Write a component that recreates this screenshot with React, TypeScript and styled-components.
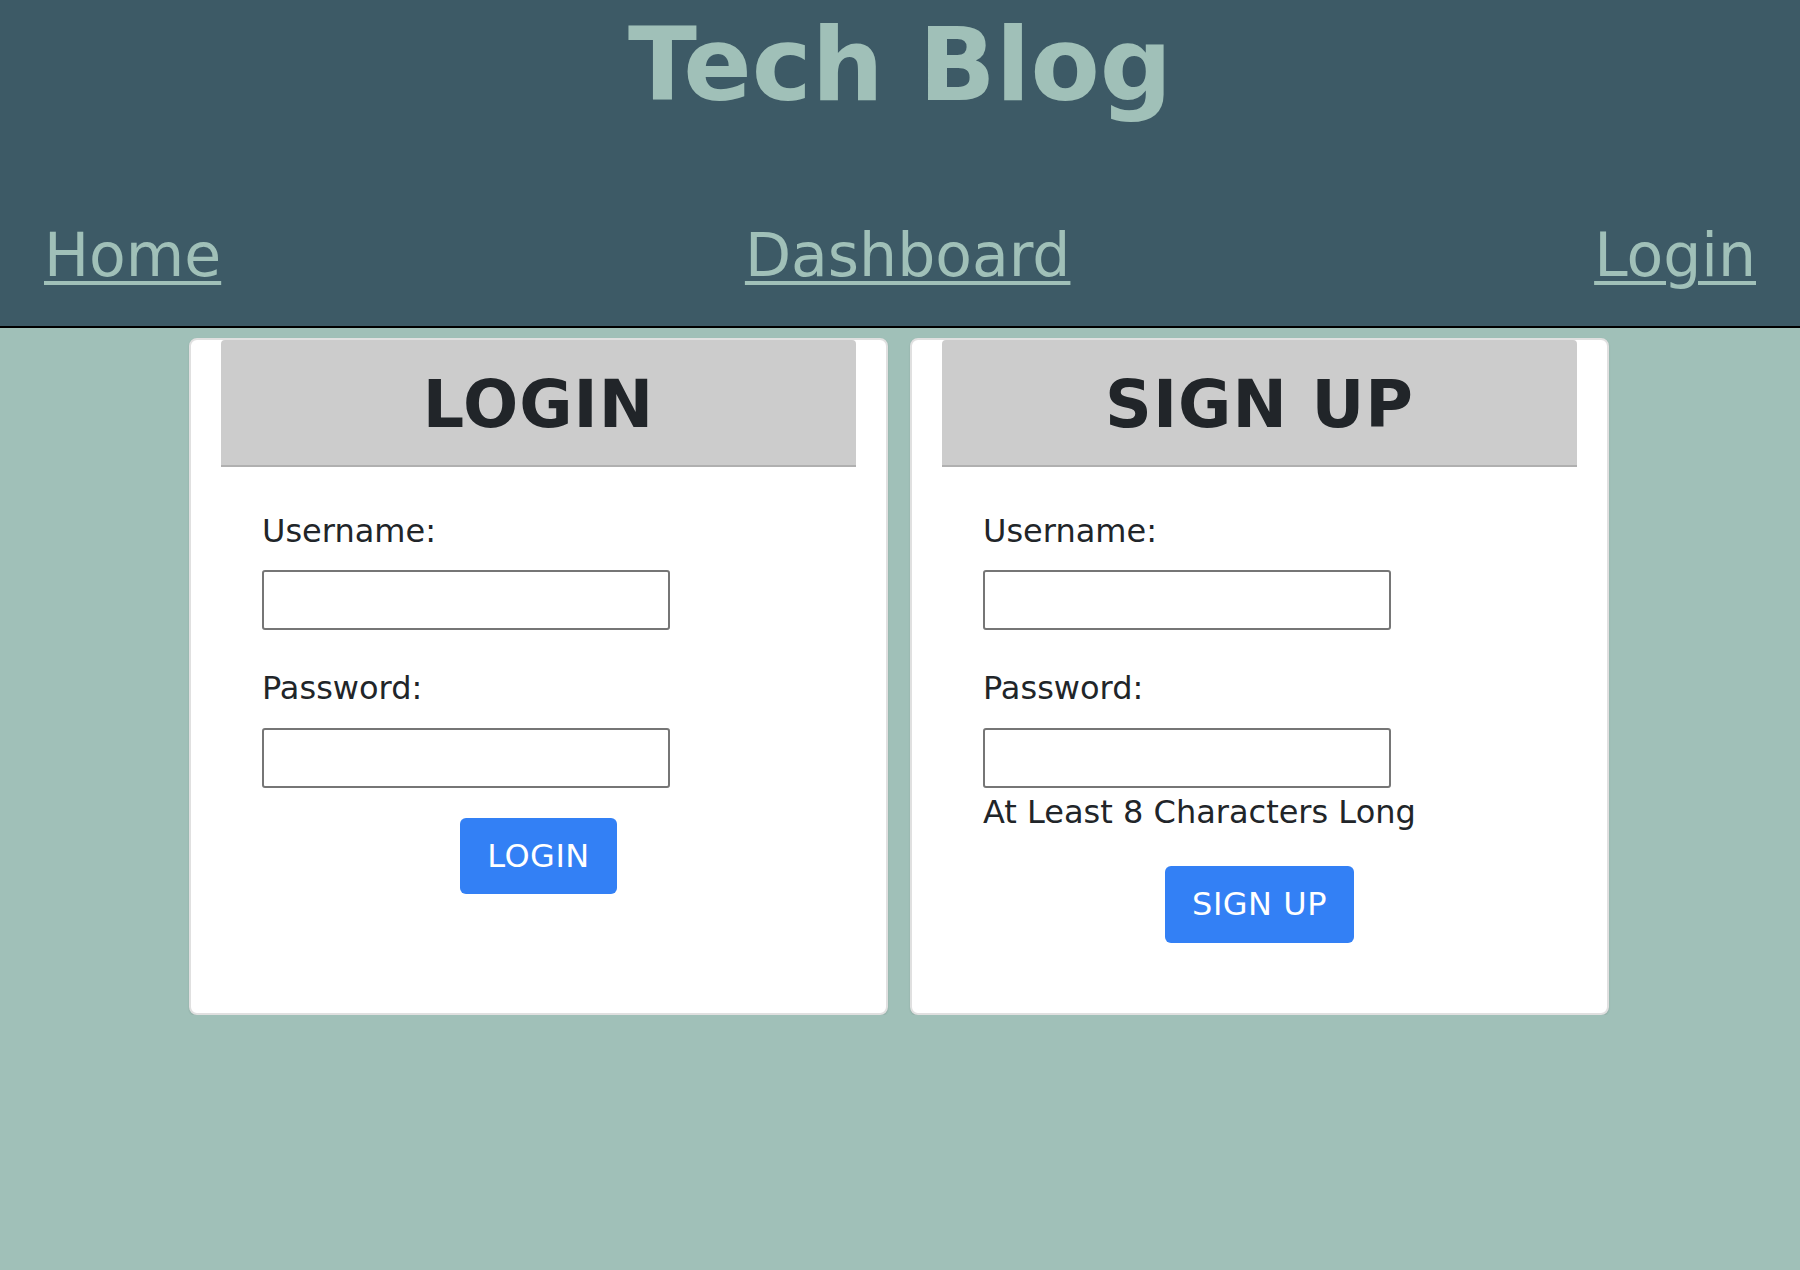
import * as React from 'react';
import styled, { createGlobalStyle } from 'styled-components';

const GlobalStyle = createGlobalStyle`
	body {
		margin: 0;
		background: #a0c0b8;
		font-family: "DejaVu Sans", Verdana, sans-serif;
		color: #212529;
	}
`;

const Header = styled.header`
	background: #3d5a66;
	border-bottom: 2px solid #000;
	padding: 15px 44px 41px;
`;
const SiteTitle = styled.h1`
	margin: 0 0 109px;
	font-size: 101px;
	line-height: 1;
	font-weight: bold;
	text-align: center;
	color: #a0c0b8;
`;
const Nav = styled.nav`
	display: flex;
	justify-content: space-between;
	align-items: baseline;
`;
const NavLink = styled.a`
	font-size: 60px;
	line-height: 1;
	color: #a0c0b8;
	text-decoration: underline;
	text-decoration-thickness: 4px;
	text-underline-offset: 5px;
`;

const Main = styled.main`
	display: flex;
	justify-content: center;
	gap: 22px;
	padding: 10px 2px 0 0;
`;
const Card = styled.section`
	box-sizing: border-box;
	width: 699px;
	background: #fff;
	border: 2px solid #e0e0e0;
	border-radius: 8px;
	box-shadow: 0 1px 2px rgba(0, 0, 0, 0.12);
	padding: 0 30px 70px;
`;
const CardHeader = styled.div`
	background: #ccc;
	border-bottom: 2px solid #b0b0b0;
	border-radius: 4px 4px 0 0;
	padding: 32px 0 28px;
	text-align: center;
`;
const CardTitle = styled.h2`
	margin: 0;
	font-size: 65px;
	line-height: 1;
	font-weight: bold;
	letter-spacing: 1px;
	color: #212529;
`;
const Form = styled.form`
	display: flex;
	flex-direction: column;
	padding: 45px 41px 0;
`;
const Label = styled.label<{ $first?: boolean }>`
	font-size: 32px;
	line-height: 1.2;
	margin: ${(p) => (p.$first ? '0' : '39px')} 0 20px;
`;
const Input = styled.input`
	box-sizing: border-box;
	width: 408px;
	height: 60px;
	border: 2px solid #767676;
	border-radius: 3px;
	background: #fff;
	font-size: 24px;
	padding: 0 8px;
`;
const Hint = styled.p`
	margin: 5px 0 5px;
	font-size: 32px;
	line-height: 1.2;
`;
const Button = styled.button`
	align-self: center;
	margin-top: 30px;
	padding: 19px 27px;
	border: none;
	border-radius: 6px;
	background: #3380f5;
	color: #fff;
	font-family: "DejaVu Sans", Verdana, sans-serif;
	font-size: 32px;
	line-height: 1.2;
	letter-spacing: 0.5px;
	cursor: pointer;
`;

export default function App() {
	return (
		<>
			<GlobalStyle />
			<Header>
				<SiteTitle>Tech Blog</SiteTitle>
				<Nav>
					<NavLink href="#">Home</NavLink>
					<NavLink href="#">Dashboard</NavLink>
					<NavLink href="#">Login</NavLink>
				</Nav>
			</Header>
			<Main>
				<Card>
					<CardHeader>
						<CardTitle>LOGIN</CardTitle>
					</CardHeader>
					<Form onSubmit={(e) => e.preventDefault()}>
						<Label $first htmlFor="login-username">Username:</Label>
						<Input id="login-username" type="text" />
						<Label htmlFor="login-password">Password:</Label>
						<Input id="login-password" type="password" />
						<Button type="submit">LOGIN</Button>
					</Form>
				</Card>
				<Card>
					<CardHeader>
						<CardTitle>SIGN UP</CardTitle>
					</CardHeader>
					<Form onSubmit={(e) => e.preventDefault()}>
						<Label $first htmlFor="signup-username">Username:</Label>
						<Input id="signup-username" type="text" />
						<Label htmlFor="signup-password">Password:</Label>
						<Input id="signup-password" type="password" />
						<Hint>At Least 8 Characters Long</Hint>
						<Button type="submit">SIGN UP</Button>
					</Form>
				</Card>
			</Main>
		</>
	);
}
